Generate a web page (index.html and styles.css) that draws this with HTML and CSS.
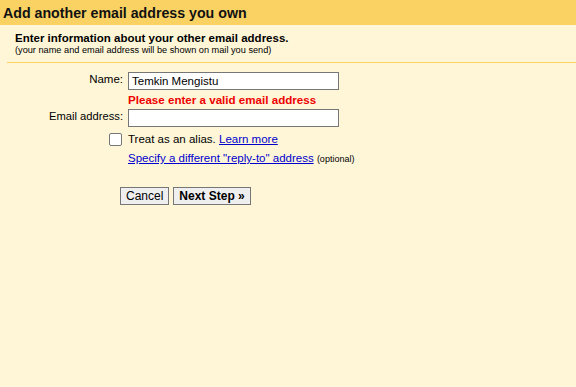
FILE: index.html
```html
<!DOCTYPE html>
<html>
<head>
<meta charset="utf-8">
<link rel="stylesheet" href="styles.css">
</head>
<body>
<div class="header">Add another email address you own</div>
<div class="intro">
  <div class="intro-title">Enter information about your other email address.</div>
  <div class="intro-sub">(your name and email address will be shown on mail you send)</div>
</div>
<div class="sep"></div>
<div class="form">
  <div class="label name-label">Name:</div>
  <div class="field"><input class="text-input" type="text" value="Temkin Mengistu"></div>
  <div class="label"></div>
  <div class="error">Please enter a valid email address</div>
  <div class="label email-label">Email address:</div>
  <div class="field"><input class="text-input" type="text" value=""></div>
  <div class="label check-cell"><span class="checkbox"></span></div>
  <div class="alias">Treat as an alias. <a href="#">Learn more</a></div>
  <div class="label"></div>
  <div class="replyto"><a href="#">Specify a different "reply-to" address</a> <span class="optional">(optional)</span></div>
</div>
<div class="buttons">
  <button class="btn">Cancel</button>
  <button class="btn btn-bold">Next Step »</button>
</div>
</body>
</html>
```
FILE: styles.css
```css
html, body {
  margin: 0;
  padding: 0;
  background: #fff6d8;
  font-family: "Liberation Sans", Arial, sans-serif;
  color: #000;
}
.header {
  background: #fad264;
  height: 25px;
  line-height: 27px;
  padding-left: 3px;
  font-size: 14.2px;
  font-weight: bold;
  color: #111;
}
.intro {
  padding: 6px 15px 0 15px;
  height: 31px;
}
.intro-title {
  font-size: 11.5px;
  font-weight: bold;
  line-height: 14px;
}
.intro-sub {
  font-size: 9.2px;
  line-height: 11px;
}
.sep {
  margin-left: 7px;
  border-top: 1px solid #fcd35f;
  height: 0;
}
.form {
  display: grid;
  grid-template-columns: 128px 1fr;
  margin-top: 9px;
  font-size: 11.5px;
}
.label {
  text-align: right;
  padding-right: 5px;
}
.name-label, .email-label {
  line-height: 15px;
}
.email-label {
  font-size: 11.2px;
}
.field {
  height: 19px;
}
.text-input {
  box-sizing: border-box;
  width: 211px;
  height: 18px;
  margin: 0;
  border: 1px solid #767676;
  background: #fff;
  font-family: "Liberation Sans", Arial, sans-serif;
  font-size: 11.5px;
  padding: 0 3px;
  color: #000;
}
.error {
  color: #ee0000;
  font-weight: bold;
  font-size: 11.6px;
  line-height: 18px;
}
.check-cell {
  display: flex;
  justify-content: flex-end;
  padding-top: 5px;
  padding-right: 6px;
  height: 18px;
}
.checkbox {
  box-sizing: border-box;
  width: 13px;
  height: 13px;
  border: 1px solid #767676;
  border-radius: 2px;
  background: #fff;
}
.alias {
  padding-top: 4px;
  line-height: 14px;
}
.replyto {
  padding-top: 0;
  line-height: 14px;
  white-space: nowrap;
}
a {
  color: #0000cc;
  text-decoration: underline;
}
.optional {
  font-size: 9px;
}
.buttons {
  margin-top: 21px;
  padding-left: 120px;
  display: flex;
  gap: 4px;
}
.btn {
  margin: 0;
  height: 18px;
  padding: 0 5px;
  border: 1px solid #767676;
  background: #efefef;
  font-family: "Liberation Sans", Arial, sans-serif;
  font-size: 12px;
  color: #000;
  border-radius: 0;
}
.btn-bold {
  font-weight: bold;
}
```
